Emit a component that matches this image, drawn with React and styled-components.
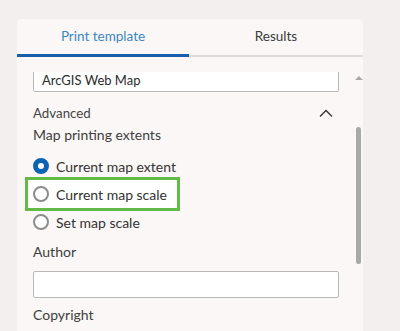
import styled, { createGlobalStyle } from 'styled-components';

const GlobalStyle = createGlobalStyle`
  html, body {
    margin: 0;
    padding: 0;
    background: #f3efee;
  }
  body {
    font-family: Lato, "Noto Sans", sans-serif;
    color: #353535;
  }
`;

const Page = styled.div`
  width: 400px;
  height: 331px;
  overflow: hidden;
  padding: 19px 0 0 17px;
  box-sizing: border-box;
`;

const Panel = styled.div`
  width: 346px;
  height: 312px;
  background: #faf7f6;
  border-radius: 5px 5px 0 0;
  display: flex;
  flex-direction: column;
  overflow: hidden;
`;

const TabList = styled.div`
  display: flex;
  height: 38px;
  flex-shrink: 0;
`;

const Tab = styled.div`
  flex: ${({ $active }) => ($active ? '0 0 172px' : '1')};
  display: flex;
  align-items: center;
  justify-content: center;
  padding-bottom: 2px;
  box-sizing: border-box;
  font-size: 13.5px;
  color: ${({ $active }) => ($active ? '#3b87c4' : '#3a3a3a')};
  border-bottom: ${({ $active }) => ($active ? '3px solid #1a5fac' : '2px solid #dcdcdc')};
`;

const Body = styled.div`
  flex: 1;
  display: flex;
  margin-top: 15px;
  overflow: hidden;
`;

const Content = styled.div`
  width: 306px;
  margin-left: 16px;
  display: flex;
  flex-direction: column;
`;

const TextInput = styled.div`
  height: ${({ $cut }) => ($cut ? 20 : 27)}px;
  flex-shrink: 0;
  box-sizing: border-box;
  background: #ffffff;
  border: 1px solid #b9b9b9;
  border-top: ${({ $cut }) => ($cut ? 'none' : '1px solid #b9b9b9')};
  border-radius: ${({ $cut }) => ($cut ? '0 0 2px 2px' : '2px')};
  margin-top: ${({ $mt }) => $mt || 0}px;
  padding: 0 8px ${({ $cut }) => ($cut ? 3 : 0)}px;
  display: flex;
  align-items: center;
  font-size: 13px;
  color: #2b2b2b;
`;

const SectionHeader = styled.div`
  display: flex;
  align-items: center;
  justify-content: space-between;
  height: 20px;
  margin-top: 11px;
  padding-right: 6px;
  font-size: 13.3px;
  color: #454545;
`;

const Label = styled.div`
  height: 20px;
  line-height: 20px;
  font-size: 14px;
  color: #3e3e3e;
  margin-top: ${({ $mt }) => $mt || 0}px;
`;

const RadioGroup = styled.div`
  display: flex;
  flex-direction: column;
  margin-top: 7px;
`;

const RadioRow = styled.div`
  display: flex;
  align-items: center;
  gap: 7px;
  height: 28px;
  font-size: 14px;
  color: #333;
  ${({ $highlight }) =>
    $highlight &&
    `
    align-self: flex-start;
    border: 3px solid #62bb46;
    margin: -3px 0 -3px -8px;
    padding: 0 10px 0 5px;
    background: #ffffff;
  `}
`;

const RadioDot = styled.span`
  width: 16px;
  height: 16px;
  border-radius: 50%;
  box-sizing: border-box;
  flex-shrink: 0;
  background: #fff;
  border: ${({ $checked }) => ($checked ? '5px solid #0a64b4' : '2px solid #8c8c8c')};
`;

const ScrollTrack = styled.div`
  width: 9px;
  margin-left: 15px;
  display: flex;
  flex-direction: column;
  align-items: center;
`;

const ScrollArrow = styled.div`
  width: 0;
  height: 0;
  margin-top: 4px;
  border-left: 4px solid transparent;
  border-right: 4px solid transparent;
  border-bottom: 4px solid #a9a9a9;
`;

const ScrollThumb = styled.div`
  width: 5px;
  height: 137px;
  margin-top: 47px;
  border-radius: 3px;
  background: #a9a9a9;
`;

const Chevron = () => (
  <svg width="14" height="8" viewBox="0 0 14 8">
    <path d="M1 7.5 L7 1.5 L13 7.5" fill="none" stroke="#333" strokeWidth="1.3" />
  </svg>
);

const extents = [
  { label: 'Current map extent', checked: true },
  { label: 'Current map scale', highlight: true },
  { label: 'Set map scale' },
];

export default function App() {
  return (
    <>
      <GlobalStyle />
      <Page>
        <Panel>
          <TabList>
            <Tab $active>Print template</Tab>
            <Tab>Results</Tab>
          </TabList>
          <Body>
            <Content>
              <TextInput $cut>ArcGIS Web Map</TextInput>
              <SectionHeader>
                <span>Advanced</span>
                <Chevron />
              </SectionHeader>
              <Label $mt={2}>Map printing extents</Label>
              <RadioGroup>
                {extents.map((item) => (
                  <RadioRow key={item.label} $highlight={item.highlight}>
                    <RadioDot $checked={item.checked} />
                    {item.label}
                  </RadioRow>
                ))}
              </RadioGroup>
              <Label $mt={6}>Author</Label>
              <TextInput $mt={9} />
              <Label $mt={7}>Copyright</Label>
            </Content>
            <ScrollTrack>
              <ScrollArrow />
              <ScrollThumb />
            </ScrollTrack>
          </Body>
        </Panel>
      </Page>
    </>
  );
}
